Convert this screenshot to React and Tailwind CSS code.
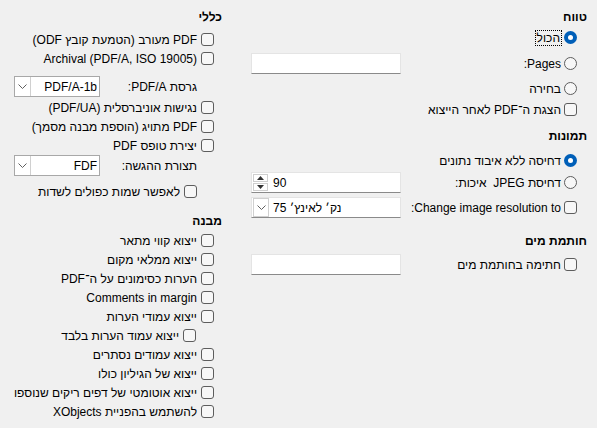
const CheckBox = () => (
    <span className="block w-[13px] h-[13px] shrink-0 rounded-[3px] border border-[#5d5d5d] bg-[#f7f7f7]" />
);

const Radio = ({ checked }) =>
    checked ? (
        <span className="flex w-[13px] h-[13px] shrink-0 rounded-full bg-[#005fb8] items-center justify-center">
            <span className="block w-[5px] h-[5px] rounded-full bg-white" />
        </span>
    ) : (
        <span className="block w-[13px] h-[13px] shrink-0 rounded-full border border-[#5d5d5d] bg-[#f7f7f7]" />
    );

const Chevron = () => (
    <svg width="9" height="5" viewBox="0 0 9 5" fill="none">
        <polyline points="0.5,0.5 4.5,4.5 8.5,0.5" stroke="#606060" strokeWidth="1" />
    </svg>
);

const Heading = ({ children, className = '' }) => (
    <div className={`h-[18px] flex items-center font-bold ${className}`}>{children}</div>
);

// left column checkbox row
const Check = ({ children, className = '', ltr }) => (
    <div className={`h-[19px] flex items-center gap-[4px] ${className}`}>
        <CheckBox />
        <span dir={ltr ? 'ltr' : undefined}>{children}</span>
    </div>
);

const Field = ({ children, ltr }) => (
    <div
        dir={ltr ? 'ltr' : undefined}
        className="w-[150px] h-[21px] bg-white border border-[#e4e4e4] border-b-[#8a8a8a] flex items-center"
    >
        {children}
    </div>
);

const LeftCombo = ({ value }) => (
    <div className="w-[86px] h-[21px] bg-white border border-[#a8a8a8] flex items-center">
        <span className="flex-1 text-right pr-[2px]">{value}</span>
        <span className="w-[16px] h-full border-r border-[#d0d0d0] flex items-center justify-center">
            <Chevron />
        </span>
    </div>
);

const App = () => {
    const structure = [
        { label: 'ייצוא קווי מתאר' },
        { label: 'ייצוא ממלאי מקום' },
        { label: 'הערות כסימונים על ה־PDF' },
        { label: 'Comments in margin' },
        { label: 'ייצוא עמודי הערות' },
        { label: 'ייצוא עמוד הערות בלבד', indent: true },
        { label: 'ייצוא עמודים נסתרים' },
        { label: 'ייצוא של הגיליון כולו' },
        { label: 'ייצוא אוטומטי של דפים ריקים שנוספו' },
        { label: 'להשתמש בהפניית XObjects' },
    ];

    return (
        <div
            dir="rtl"
            className="w-[597px] h-[428px] bg-[#f0f0f0] flex overflow-hidden text-[12px] leading-none text-black font-['Liberation_Sans','DejaVu_Sans',sans-serif]"
        >
            {/* Right column: range / images / watermark */}
            <div className="w-[357px] pl-[11px] pr-[10px] pt-[8px] flex flex-col">
                <Heading>טווח</Heading>

                <div className="mt-[2px] mr-[10px] h-[19px] flex items-center gap-[2px]">
                    <Radio checked />
                    <span className="border border-dotted border-black px-[1px] py-[1px]">הכול</span>
                </div>

                <div className="mt-[6px] h-[21px] flex items-center justify-between">
                    <div className="mr-[10px] flex items-center gap-[3px]">
                        <Radio />
                        <span>Pages:</span>
                    </div>
                    <Field />
                </div>

                <div className="mt-[5px] mr-[10px] h-[19px] flex items-center gap-[3px]">
                    <Radio />
                    <span>בחירה</span>
                </div>

                <div className="mt-[2px] mr-[10px] h-[19px] flex items-center gap-[3px]">
                    <CheckBox />
                    <span>הצגת ה־PDF לאחר הייצוא</span>
                </div>

                <Heading className="mt-[8px]">תמונות</Heading>

                <div className="mt-[6px] mr-[10px] h-[19px] flex items-center gap-[3px]">
                    <Radio checked />
                    <span>דחיסה ללא איבוד נתונים</span>
                </div>

                <div className="mt-[2px] h-[21px] flex items-center justify-between">
                    <div className="mr-[10px] flex items-center gap-[3px]">
                        <Radio />
                        <span className="whitespace-pre">דחיסת JPEG  איכות:</span>
                    </div>
                    <Field ltr>
                        <div className="ml-[1px] w-[15px] flex flex-col gap-[1px]">
                            <span className="h-[8px] border border-[#cfcfcf] flex items-center justify-center">
                                <svg width="7" height="4" viewBox="0 0 7 4">
                                    <polygon points="3.5,0 7,4 0,4" fill="#333" />
                                </svg>
                            </span>
                            <span className="h-[8px] border border-[#cfcfcf] flex items-center justify-center">
                                <svg width="7" height="4" viewBox="0 0 7 4">
                                    <polygon points="0,0 7,0 3.5,4" fill="#333" />
                                </svg>
                            </span>
                        </div>
                        <span className="ml-[5px]">90</span>
                    </Field>
                </div>

                <div className="mt-[4px] h-[21px] flex items-center justify-between">
                    <div className="mr-[10px] flex items-center gap-[3px]">
                        <CheckBox />
                        <span>Change image resolution to:</span>
                    </div>
                    <Field ltr>
                        <span className="ml-[1px] w-[16px] h-[19px] border border-[#d0d0d0] flex items-center justify-center">
                            <Chevron />
                        </span>
                        <span className="ml-[4px]">75 נק׳ לאינץ׳</span>
                    </Field>
                </div>

                <Heading className="mt-[14px]">חותמת מים</Heading>

                <div className="mt-[4px] h-[21px] flex items-center justify-between">
                    <div className="mr-[10px] flex items-center gap-[3px]">
                        <CheckBox />
                        <span>חתימה בחותמת מים</span>
                    </div>
                    <Field />
                </div>
            </div>

            {/* Left column: general / structure */}
            <div className="w-[240px] pl-[14px] pr-[18px] pt-[8px] flex flex-col">
                <Heading>כללי</Heading>

                <Check className="mt-[4px] mr-[8px]">PDF מעורב (הטמעת קובץ ODF)</Check>
                <Check className="mr-[8px]" ltr>Archival (PDF/A, ISO 19005)</Check>

                <div className="mt-[8px] h-[21px] flex items-center justify-between">
                    <span className="mr-[25px]">גרסת PDF/A:</span>
                    <LeftCombo value="PDF/A-1b" />
                </div>

                <Check className="mt-[1px] mr-[8px]">נגישות אוניברסלית (PDF/UA)</Check>
                <Check className="mr-[8px]">PDF מתויג (הוספת מבנה מסמך)</Check>
                <Check className="mr-[8px]">יצירת טופס PDF</Check>

                <div className="h-[21px] flex items-center justify-between">
                    <span className="mr-[25px]">תצורת ההגשה:</span>
                    <LeftCombo value="FDF" />
                </div>

                <Check className="mt-[6px] mr-[25px]">לאפשר שמות כפולים לשדות</Check>

                <Heading className="mt-[11px]">מבנה</Heading>

                <div className="mt-[1px] flex flex-col">
                    {structure.map(({ label, indent }) => (
                        <Check key={label} className={indent ? 'mr-[26px]' : 'mr-[8px]'}>
                            {label}
                        </Check>
                    ))}
                </div>
            </div>
        </div>
    );
};

export default App;
